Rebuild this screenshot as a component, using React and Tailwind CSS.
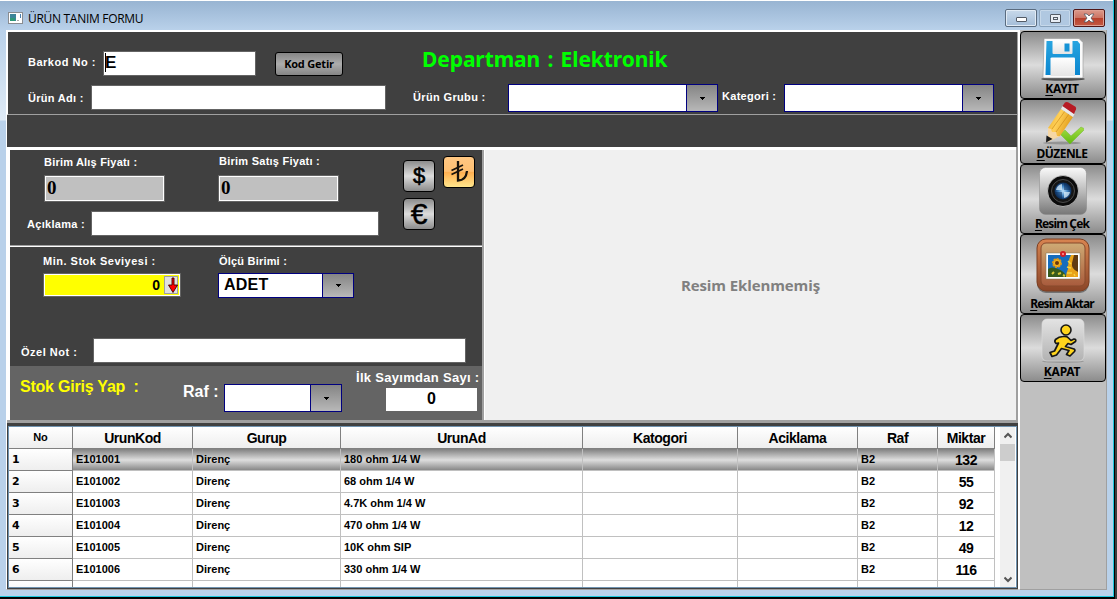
import React from "react";

const LABEL = "block whitespace-nowrap font-['Liberation_Sans'] text-[11px] font-bold leading-[14px] text-white";

function Label({ className = "", children }) {
  return <label className={`${LABEL} ${className}`}>{children}</label>;
}

function Field({ className = "", children }) {
  return <div className={`shrink-0 border border-[#646464] bg-white ${className}`}>{children}</div>;
}

function Combo({ className = "", children }) {
  return (
    <div className={`flex shrink-0 border border-[#000080] bg-white font-['Liberation_Sans'] text-[16px] font-bold ${className}`}>
      <div className="flex-1 pl-[5px] leading-[21px] tracking-[0.2px]">{children}</div>
      <div className="flex w-[31px] items-center justify-center border-l border-[#000080] bg-linear-to-b from-[#858585] to-[#b8b8b8]">
        <svg width="5" height="3" viewBox="0 0 5 3" shapeRendering="crispEdges">
          <path d="M0 0h5v1H4v1H3v1H2V2H1V1H0z" fill="#000" />
        </svg>
      </div>
    </div>
  );
}

const METAL = "bg-[linear-gradient(#8c8c8c_0%,#dcdcdc_50%,#8c8c8c_100%)]";

function Currency({ className = "", children }) {
  return (
    <button className={`flex size-8 items-center justify-center rounded-[4px] border border-black font-['Liberation_Sans'] leading-none ${className}`}>
      {children}
    </button>
  );
}

function SaveIcon() {
  return (
    <svg width="46" height="44" viewBox="0 0 46 44">
      <defs>
        <linearGradient id="disk" x2="0" y2="1"><stop stopColor="#28a5e0" /><stop offset="1" stopColor="#0b86cf" /></linearGradient>
        <linearGradient id="paper" x2="0" y2="1"><stop stopColor="#fff" /><stop offset="1" stopColor="#e4e4e4" /></linearGradient>
      </defs>
      <ellipse cx="23" cy="41" rx="22" ry="1.800" fill="#333" opacity=".8" />
      <path d="M5 .5h34l4 4V39q0 1-1 1H4q-1 0-1-1L4 1.500q0-1 1-1z" fill="#fafafa" stroke="#999" strokeWidth=".6" />
      <path d="M6.500 3h31L40 6v31H5.500z" fill="url(#disk)" />
      <path d="M12.500 2.500h20V15q0 1-1 1h-18q-1 0-1-1z" fill="url(#paper)" />
      <path d="M24.500 5.500h5v8h-5z" fill="#1593d6" />
      <path d="M12 19.500h22q1 0 1 1V38H10.500V20.500q0-1 1.500-1z" fill="url(#paper)" />
    </svg>
  );
}

function EditIcon() {
  return (
    <svg width="42" height="44" viewBox="0 0 42 44">
      <defs>
        <linearGradient id="pencil" x2="1" y2=".5"><stop stopColor="#e9a91d" /><stop offset=".45" stopColor="#ffd058" /><stop offset="1" stopColor="#dd9410" /></linearGradient>
        <linearGradient id="tick" x2="0" y2="1"><stop stopColor="#a4de45" /><stop offset="1" stopColor="#62b910" /></linearGradient>
      </defs>
      <ellipse cx="20" cy="42" rx="19" ry="1.500" fill="#555" opacity=".4" />
      <path d="M18 33l5-4 6 6 10-9 4 2-15 15z" fill="url(#tick)" stroke="#70b730" strokeWidth=".5" />
      <path d="M6 27L19 8l12 8-13 19-12 5z" fill="url(#pencil)" />
      <path d="M6 27l3 1 1 3 4 0 1 4 3 0-12 6z" fill="#f6d7a5" />
      <path d="M4.500 34.500l6 3.500-6.500 3.500z" fill="#181818" />
      <path d="M10 28L23 10M14 31L27 13" stroke="#c47f10" strokeWidth="1" opacity=".55" />
      <path d="M19 8l1.500-3 12 8L31 16z" fill="#e9e9e9" />
      <path d="M20.500 5L23 1.500q1-1 3-.3l7.500 4.500q1 1 .5 2.500L32 13z" fill="#b71b24" />
    </svg>
  );
}

function CameraIcon() {
  return (
    <svg width="48" height="48" viewBox="0 0 48 48">
      <defs>
        <linearGradient id="cam" x2="0" y2="1"><stop stopColor="#fafafa" /><stop offset=".55" stopColor="#b5b5b5" /><stop offset="1" stopColor="#777" /></linearGradient>
        <radialGradient id="lens"><stop stopColor="#bfe4ff" /><stop offset=".55" stopColor="#3c80c0" /><stop offset="1" stopColor="#0a2b58" /></radialGradient>
      </defs>
      <rect x=".5" y=".5" width="47" height="47" rx="6" fill="url(#cam)" stroke="#888" strokeWidth=".5" />
      <circle cx="24" cy="24" r="15.500" fill="#0b0b0b" stroke="#ddd" strokeWidth=".7" />
      <circle cx="24" cy="24" r="11.500" fill="#161616" stroke="#4b4b4b" />
      <circle cx="24" cy="24" r="8.500" fill="url(#lens)" />
      <path d="M25 23V16a8 8 0 0 1 7 7zM23 25v7a8 8 0 0 1-7-7z" fill="#07264f" opacity=".5" />
      <path d="M23 23h-6q1-5 6-6zM25 25h6q-1 5-6 6z" fill="#d9edfa" opacity=".75" />
    </svg>
  );
}

function PictureIcon() {
  return (
    <svg width="54" height="56" viewBox="0 0 54 56">
      <defs>
        <linearGradient id="wood" x2="0" y2="1"><stop stopColor="#d88450" /><stop offset="1" stopColor="#8b4528" /></linearGradient>
        <linearGradient id="cork" x2="0" y2="1"><stop stopColor="#ceab76" /><stop offset=".6" stopColor="#b97a50" /><stop offset="1" stopColor="#a85b3d" /></linearGradient>
      </defs>
      <rect x="1" y="2" width="52" height="53" rx="9" fill="#444" opacity=".6" />
      <rect x="1" y="1" width="52" height="52" rx="9" fill="url(#wood)" stroke="#7d3e20" />
      <rect x="5" y="5" width="44" height="43" rx="5" fill="url(#cork)" stroke="#874a2c" />
      <path d="M10 15h34v26H10z" fill="#fff" stroke="#775" strokeWidth=".5" />
      <path d="M12 17h30v22H12z" fill="#176dbd" />
      <path d="M12 31q4-3 10 0 6 2 9 8H12z" fill="#355b1d" />
      <path d="M35 17h7v22H30q0-4 2-8 0-9 3-14z" fill="#e9a318" />
      <path d="M38 17h4v17q-7-3-6-9z" fill="#603a12" />
      <circle cx="21" cy="25" r="4" fill="#f5b51c" stroke="#e19614" strokeDasharray="2 1" strokeWidth="2" />
      <circle cx="21" cy="25" r="2" fill="#69370d" />
      <path d="M16 36l2-2M22 36l3-1M27 37l2 1" stroke="#d6c536" strokeWidth="2" />
      <path d="M32 23l3 3M31 29l4 1M31 35l5 0M38 36l1 2" stroke="#f4d344" strokeWidth="1.500" />
      <circle cx="27" cy="16" r="3" fill="#d31f26" /><circle cx="27" cy="16" r="1" fill="#ffa0a0" />
    </svg>
  );
}

function RunnerIcon() {
  return (
    <svg width="44" height="46" viewBox="0 0 44 46">
      <defs>
        <linearGradient id="tile" x2="0" y2="1"><stop stopColor="#e3e3e3" /><stop offset="1" stopColor="#b2b2b2" /></linearGradient>
      </defs>
      <ellipse cx="22" cy="43.500" rx="21" ry="1.500" fill="#777" opacity=".5" />
      <rect x="1" y="1" width="42" height="42" rx="5" fill="url(#tile)" stroke="#ddd" strokeWidth=".6" />
      <path d="M14.500 21.500Q18 18.500 22 18.500q4-.5 5.500 1.500l2.500 2.500 3-1.500q2.500 0 1.500 2.500L30 26.500l-3-1-2.500 3 8.500 2.500q1.500 1 .5 2.500L29 38l-3.500-1.500 2.500-4-7.500-2L15.500 37 11 38.500 9 34.500l4.500-1.500 4-8-2.500.5q-2-2-.5-4z" fill="#ffd51c" stroke="#171717" strokeWidth="1.700" strokeLinejoin="round" />
      <circle cx="25" cy="12" r="5" fill="#ffd51c" stroke="#171717" strokeWidth="1.600" />
    </svg>
  );
}

const ACTIONS = [
  { key: "K", rest: "AYIT", icon: <SaveIcon />, box: "h-[68px] pt-[6px]", text: "tracking-[-0.25px]" },
  { key: "D", rest: "ÜZENLE", icon: <EditIcon />, box: "h-[65px] pt-[1px]", text: "tracking-[-0.55px]" },
  { key: "R", rest: "esim Çek", icon: <CameraIcon />, box: "h-[70px] pt-[2px]", text: "tracking-[-0.85px]" },
  { key: "R", rest: "esim Aktar", icon: <PictureIcon />, box: "h-[80px] pt-[3px]", text: "tracking-[-0.85px]" },
  { key: "K", rest: "APAT", icon: <RunnerIcon />, box: "h-[68px] pt-[3px]", text: "tracking-[-0.25px]" },
];

const ROWS = [
  ["1", "E101001", "Direnç", "180 ohm 1/4 W", "132"],
  ["2", "E101002", "Direnç", "68 ohm 1/4 W", "55"],
  ["3", "E101003", "Direnç", "4.7K ohm 1/4 W", "92"],
  ["4", "E101004", "Direnç", "470 ohm 1/4 W", "12"],
  ["5", "E101005", "Direnç", "10K ohm SIP", "49"],
  ["6", "E101006", "Direnç", "330 ohm 1/4 W", "116"],
];

const COLS = "grid grid-rows-[22px] grid-cols-[64px_120px_148px_242px_155px_120px_80px_57px]";
const HEADS = ["No", "UrunKod", "Gurup", "UrunAd", "Katogori", "Aciklama", "Raf", "Miktar"];

function TitleBar() {
  return (
    <header className="flex h-[30px] shrink-0 border-t border-white bg-linear-to-b from-[#98b4d2] to-[#b9d1ea] pl-2 pr-[8px]">
      <svg className="mt-[11px]" width="15" height="12" viewBox="0 0 15 12" shapeRendering="crispEdges">
        <path d="M0 0h15v12H0z" fill="#8a8d91" /><path d="M1 1h13v10H1z" fill="#fff" />
        <path d="M2 2h6v7H2z" fill="#3d8599" /><path d="M2 6h5v3H2z" fill="#2e9877" /><path d="M9 8h2v1H9z" fill="#aaa" /><path d="M12 2h1v4h-1z" fill="#4880b0" />
      </svg>
      <h1 className="ml-[5px] mt-[9px] whitespace-nowrap font-['Open_Sans'] text-[12px] leading-[18px] tracking-[-0.3px] text-black">ÜRÜN TANIM FORMU</h1>
      <div className="ml-auto mt-[8px] flex h-[18px] gap-[2px]">
        <div className="flex w-[32px] items-center justify-center rounded-[2px] border border-[#5a6c80] bg-linear-to-b from-[#c8d9ea] to-[#a4bdd8] pt-[3px] shadow-[inset_0_0_0_1px_#e1ebf5]">
          <div className="h-[5px] w-[11px] rounded-[1px] border border-[#535b66] bg-white" />
        </div>
        <div className="flex w-[32px] items-center justify-center rounded-[2px] border border-[#8ba4bd] bg-[#b0c8e1] shadow-[inset_0_0_0_1px_#c6d8ea]">
          <div className="flex h-[9px] w-[11px] items-center justify-center rounded-[1px] border border-[#535b66] bg-[#e8edf4]">
            <div className="h-[3px] w-[5px] border border-[#535b66]" />
          </div>
        </div>
        <div className="flex w-[32px] items-center justify-center rounded-[2px] border border-[#501617] bg-[linear-gradient(#dc9a8c_0%,#cc7464_48%,#b8402c_52%,#c45a45_100%)] shadow-[inset_0_0_0_1px_#dfa093]">
          <svg width="12" height="10" viewBox="0 0 12 10"><path d="M1 1h3l2 2 2-2h3L8 5l3 4H8L6 7 4 9H1l3-4z" fill="#fff" stroke="#555b66" strokeWidth=".8" /></svg>
        </div>
      </div>
    </header>
  );
}

function ProductHeader() {
  return (
    <section className="h-[83px] shrink-0 border-b border-l border-b-[#a0a0a0] border-l-white bg-[#404040]">
      <div className="mt-[19px] flex h-[25px]">
        <Label className="ml-[20px] mt-[4px] w-[75px] tracking-[0.5px]">Barkod No :</Label>
        <Field className="flex h-[25px] w-[153px] pl-px">
          <div className="mt-px h-[19px] w-px bg-black" />
          <span className="-ml-px font-['Liberation_Sans'] text-[17px] font-bold leading-[21px]">E</span>
        </Field>
        <button className="ml-[19px] mt-px h-[24px] w-[68px] whitespace-nowrap rounded-[3px] border border-black bg-linear-to-b from-[#858585] via-[#adadad] to-[#858585] font-['Open_Sans'] text-[11px] font-bold leading-[20px] tracking-[-0.2px]">Kod Getir</button>
        <h2 className="-mt-[7px] ml-[79px] whitespace-nowrap font-['Noto_Sans'] text-[21px] font-bold leading-[30px] tracking-[-0.1px] text-[#00ff00] [word-spacing:2px]">Departman : Elektronik</h2>
      </div>
      <div className="mt-[8px] flex h-[28px]">
        <Label className="ml-[20px] mt-[7px] w-[63px] tracking-[0.3px]">Ürün Adı :</Label>
        <Field className="mt-px h-[25px] w-[295px]" />
        <Label className="ml-[27px] mt-[6px] w-[95px] tracking-[0.35px]">Ürün Grubu :</Label>
        <Combo className="h-[28px] w-[210px]" />
        <Label className="ml-[4px] mt-[5px] w-[62px] tracking-[0.3px]">Kategori :</Label>
        <Combo className="h-[28px] w-[210px]" />
      </div>
    </section>
  );
}

function PricePanel() {
  return (
    <section className="flex h-[97px] shrink-0 border-b border-white bg-[#404040] shadow-[inset_0_-1px_0_#a0a0a0]">
      <div className="w-[393px]">
        <div className="flex h-[26px] pt-[5px]">
          <Label className="ml-[34px] w-[175px] tracking-[0.2px]">Birim Alış Fiyatı :</Label>
          <Label className="-mt-px tracking-[0.25px]">Birim Satış Fiyatı :</Label>
        </div>
        <div className="-mt-px ml-[34px] flex gap-[53px]">
          {["alis", "satis"].map((k) => (
            <div key={k} className="h-[27px] w-[121px] border border-[#646464] bg-[#c0c0c0] pl-[2px] font-['Liberation_Serif'] text-[19px] font-bold leading-[24px] shadow-[inset_0_0_0_1px_#fff]">0</div>
          ))}
        </div>
        <div className="mt-[9px] flex">
          <Label className="ml-[17px] mt-[6px] w-[64px] tracking-[0.3px]">Açıklama :</Label>
          <Field className="h-[25px] w-[288px]" />
        </div>
      </div>
      <div className="mt-[10px] flex flex-col gap-[6px]">
        <Currency className={`${METAL} text-[22px]`}>
          <span className="[-webkit-text-stroke:0.6px_black]">$</span>
        </Currency>
        <Currency className={METAL}>
          <span className="text-[30px] leading-none [-webkit-text-stroke:0.4px_black]">€</span>
        </Currency>
      </div>
      <Currency className="ml-[8px] mt-[6px] bg-[linear-gradient(#ffc783_0%,#ffc072_48%,#ffae4f_50%,#ffe68c_100%)]">
        <svg width="19" height="24" viewBox="0 0 19 24" fill="none" stroke="#18130c"><path d="M8 1v19.500q8 0 9-9.500" strokeWidth="2.300" /><path d="M1.500 10.500L13 5M1.500 14.500L13 9" strokeWidth="1.800" /></svg>
      </Currency>
    </section>
  );
}

function StockPanel() {
  return (
    <section className="h-[119px] shrink-0 bg-[#404040]">
      <div className="flex h-[26px] pt-[7px]">
        <Label className="ml-[33px] w-[176px] tracking-[0.5px]">Min. Stok Seviyesi :</Label>
        <Label className="tracking-[0.2px]">Ölçü Birimi :</Label>
      </div>
      <div className="ml-[33px] flex">
        <div className="flex h-[24px] w-[138px] justify-end border border-[#646464] bg-[#ff0] pr-[2px] font-['Liberation_Sans'] text-[14px] font-bold leading-[22px] shadow-[inset_0_0_0_1px_#fff]">
          0
          <div className="ml-[4px] mt-[2px] flex h-[18px] w-[14px] justify-center border border-[#a0a0a0] bg-[#e1e1e1]">
            <svg className="ml-[4px] shrink-0" width="10" height="17" viewBox="0 0 10 17"><path d="M4 1h2v7h3.500L5 15.500.5 8H4z" fill="red" stroke="#400" strokeWidth=".9" /></svg>
          </div>
        </div>
        <Combo className="ml-[37px] h-[25px] w-[136px]">ADET</Combo>
      </div>
      <div className="mt-[40px] flex">
        <Label className="ml-[11px] mt-[7px] w-[72px] tracking-[0.5px]">Özel Not :</Label>
        <Field className="h-[25px] w-[373px]" />
      </div>
    </section>
  );
}

function EntryPanel() {
  return (
    <section className="flex h-[54px] shrink-0 bg-[#646464] font-['Liberation_Sans'] font-bold text-white">
      <p className="ml-[10px] mt-[11px] w-[163px] whitespace-pre text-[16px] leading-[20px] tracking-[-0.22px] text-[#ff0]">{"Stok Giriş Yap  :"}</p>
      <label className="mt-[16px] w-[41px] whitespace-nowrap text-[16px] leading-[20px]">Raf :</label>
      <Combo className="mt-[18px] h-[28px] w-[118px]" />
      <div className="ml-[14px] mt-[4px]">
        <label className="block whitespace-nowrap text-[13px] leading-[16px] tracking-[0.3px]">İlk Sayımdan Sayı :</label>
        <div className="ml-[30px] mt-[2px] h-[23px] w-[91px] bg-white text-center text-[16px] leading-[22px] text-black">0</div>
      </div>
    </section>
  );
}

const HEAD_CELL = "border-b border-r border-[#808080] bg-linear-to-b from-white to-[#eee] text-center";
const CELL = "overflow-hidden whitespace-nowrap border-b border-r border-[#c0c0c0] pl-[3px]";

function StockTable() {
  return (
    <section className="flex h-[166px] shrink-0 border border-t-[3px] border-[#404040]">
      <div className="flex flex-1 overflow-hidden border border-[#7093b0] bg-white font-['Liberation_Sans'] font-bold">
        <div className="h-full w-[986px] overflow-hidden">
          <div className={`${COLS} text-[14px] leading-[23px] tracking-[-0.45px]`}>
            {HEADS.map((h, i) => (
              <div key={h} className={`${HEAD_CELL} ${i === 0 ? "text-[11px] leading-[20px] tracking-normal" : ""}`}>{h}</div>
            ))}
          </div>
          {ROWS.map(([no, code, group, name, qty], i) => (
            <div key={no} className={`${COLS} text-[11px] leading-[20px] ${i === 0 ? "bg-[linear-gradient(#808080,#dedede_50%,#808080)]" : ""}`}>
              <div className="border-b border-r border-[#808080] bg-linear-to-b from-white to-[#eee] pl-[3px] font-['DejaVu_Sans'] leading-[21px]">{no}</div>
              <div className={CELL}>{code}</div>
              <div className={CELL}>{group}</div>
              <div className={CELL}>{name}</div>
              <div className={CELL} />
              <div className={CELL} />
              <div className={CELL}>B2</div>
              <div className="border-b border-r border-[#c0c0c0] text-center text-[14px] leading-[23px] tracking-[-0.5px]">{qty}</div>
            </div>
          ))}
          <div className={COLS}>
            <div className={HEAD_CELL} />
            {HEADS.slice(1).map((h) => <div key={h} className={CELL} />)}
          </div>
        </div>
        <div className="ml-[5px] flex w-[15px] shrink-0 flex-col items-center bg-[#f0f0f0]">
          <svg className="my-[5px] shrink-0" width="8" height="7" viewBox="0 0 8 7" fill="none" stroke="#555" strokeWidth="2"><path d="M.5 5.500L4 2l3.500 3.500" /></svg>
          <div className="h-[17px] w-[15px] bg-[#cdcdcd]" />
          <svg className="mb-[4px] mt-auto shrink-0" width="8" height="7" viewBox="0 0 8 7" fill="none" stroke="#555" strokeWidth="2"><path d="M.5 1.500L4 5l3.500-3.500" /></svg>
        </div>
      </div>
    </section>
  );
}

export default function App() {
  return (
    <div className="flex h-[599px] w-[1117px] overflow-hidden bg-[#3c3c3c] text-black">
      <div className="flex w-[1115px] flex-col border-b-2 border-r border-black">
        <div className="flex min-h-0 flex-1 flex-col border-b border-r border-[#1cc6dc] bg-[#b9d1ea]">
          <TitleBar />
          <div className="flex h-[560px] shrink-0">
            <div className="w-[6px] bg-[linear-gradient(#b9d1ea,#e0ebf6_90px,#b9d1ea_91px)]" />
            <main className="flex w-[1013px] flex-col border-b border-l border-r border-t-2 border-b-[#a0a0a0] border-l-white border-r-white border-t-white bg-white">
              <div className="flex h-[115px] shrink-0 flex-col border-r border-[#a0a0a0] bg-[#404040]">
                <ProductHeader />
              </div>
              <div className="flex h-[276px] shrink-0 border-b-[3px] border-r-2 border-[#a0a0a0] pt-[3px]">
                <div className="ml-[3px] flex w-[472px] flex-col">
                  <PricePanel />
                  <StockPanel />
                  <EntryPanel />
                </div>
                <div className="w-[2px] bg-[#a0a0a0]" />
                <div className="ml-px flex flex-1 items-center justify-center bg-[#f0f0f0] font-['Open_Sans'] text-[15px] font-bold tracking-[-0.1px] text-[#808080]">Resim Eklenmemiş</div>
              </div>
              <StockTable />
            </main>
            <aside className="flex w-[88px] flex-col border-b border-l border-r border-b-[#a0a0a0] border-l-white border-r-[#a0a0a0] bg-[#c0c0c0] pt-px">
              {ACTIONS.map((a) => (
                <button key={a.key + a.rest} className={`flex w-[86px] shrink-0 flex-col items-center justify-between rounded-[4px] border border-black pb-[2px] ${METAL} ${a.box}`}>
                  {a.icon}
                  <span className={`-mt-[4px] mr-[2px] whitespace-nowrap font-['Noto_Sans'] text-[12px] font-bold leading-[15px] ${a.text}`}><u className="underline-offset-2">{a.key}</u>{a.rest}</span>
                </button>
              ))}
            </aside>
            <div className="flex-1 bg-[linear-gradient(#b9d1ea,#e0ebf6_90px,#b9d1ea_91px)]" />
          </div>
        </div>
      </div>
    </div>
  );
}
